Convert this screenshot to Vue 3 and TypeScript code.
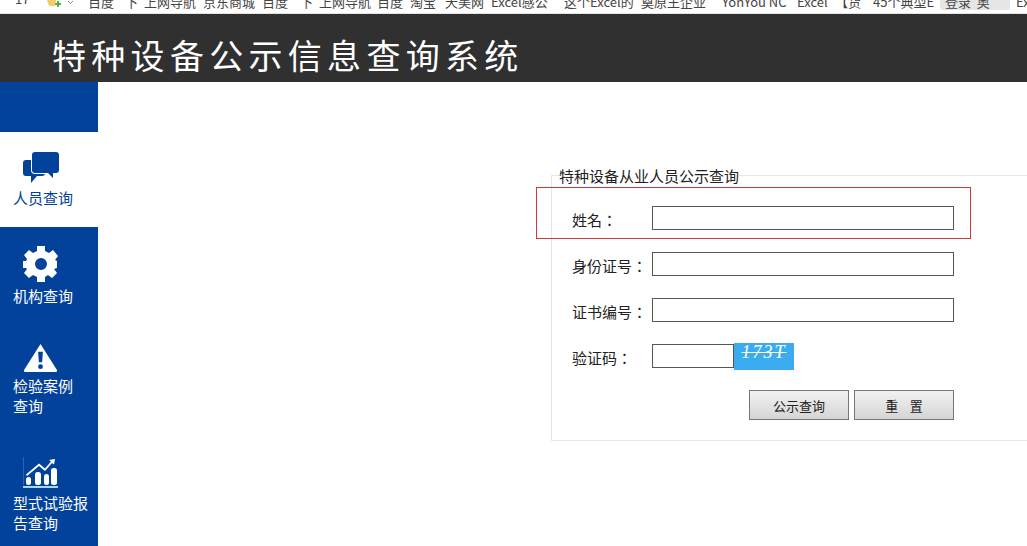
<script setup lang="ts">
const bookmarks: { text: string; w: number; hl?: boolean }[] = [
  { text: '', w: 88 },
  { text: '百度', w: 37 },
  { text: '下', w: 19 },
  { text: '上网导航', w: 59 },
  { text: '京东商城', w: 59 },
  { text: '百度', w: 38 },
  { text: '下', w: 19 },
  { text: '上网导航', w: 58 },
  { text: '百度', w: 33 },
  { text: '淘宝', w: 35 },
  { text: '天美网', w: 46 },
  { text: 'Excel感公', w: 73 },
  { text: '这个Excel的', w: 77 },
  { text: '奠原王企业', w: 81 },
  { text: 'YonYou NC', w: 75 },
  { text: 'Excel', w: 38 },
  { text: '【货', w: 38 },
  { text: '45个典型E', w: 67 },
  { text: '登录  奥', w: 70, hl: true },
  { text: '', w: 6 },
  { text: 'Ex', w: 11 },
]
const rows = [
  { label: '身份证号：' },
  { label: '证书编号：' },
]
</script>

<template>
  <div class="page">
    <div class="bookmarks">
      <span v-for="(b, i) in bookmarks" :key="i" class="bm" :class="{ hl: b.hl }" :style="{ width: b.w + 'px' }">{{ b.text }}</span>
      <span class="back">17</span>
      <svg class="star" width="27" height="8" viewBox="0 0 27 8">
        <path d="M0 0h9l-1 6H2z" fill="#f1cf62"/>
        <path d="M8 3h2V1h2v2h2v2h-2v2h-2V5H8z" fill="#4caf50"/>
        <path d="M21 1l2.500 2.500L26 1" fill="none" stroke="#888"/>
      </svg>
    </div>
    <header class="top">特种设备公示信息查询系统</header>
    <div class="body">
      <nav class="side">
        <div class="item active">
          <svg class="icon" width="36" height="31" viewBox="0 0 36 31">
            <path d="M3 8h16c2 0 3 1 3 3v10c0 2-1 3-3 3h-5l-6 7v-7H3c-2 0-3-1-3-3V11c0-2 1-3 3-3z" fill="#03429b"/>
            <path d="M12 0h21c2 0 3 1 3 3v15c0 2-1 3-3 3h-3v5l-5-5H12c-2 0-3-1-3-3V3c0-2 1-3 3-3z" fill="#03429b" stroke="#fff" stroke-width="2" paint-order="stroke"/>
          </svg>
          <div class="name">人员查询</div>
        </div>
        <div class="item i2">
          <svg class="icon" width="36" height="36" viewBox="0 0 36 36">
            <path fill-rule="evenodd" fill="#fff" d="M14 0h8v5l4 2 4-3 5 6-3 4 2 1v7l-3 1 3 4-5 5-4-3-3 2v5h-8v-5l-4-2-4 3-5-5 3-4-1-1H0v-7h3l1-2-3-4 5-5 4 3 4-2zM18 12a6 6 0 1 0 0 12 6 6 0 1 0 0-12z"/>
          </svg>
          <div class="name">机构查询</div>
        </div>
        <div class="item i3">
          <svg class="icon" width="35" height="28" viewBox="0 0 36 29">
            <path fill-rule="evenodd" fill="#fff" d="M18 0 35 27c.6 1 0 2-1 2H2c-1 0-1.600-1-1-2zM15.500 8l.8 11h3.400l.8-11zM18 21a2.500 2.500 0 1 0 0 5 2.500 2.500 0 1 0 0-5z"/>
          </svg>
          <div class="name">检验案例<br />查询</div>
        </div>
        <div class="item i4">
          <svg class="icon" width="35" height="31" viewBox="0 0 35 31">
            <path d="M.5 0v28" stroke="#2a63b2" fill="none"/>
            <g fill="#fff">
              <rect x="3" y="20" width="5" height="8" rx="2.500"/>
              <rect x="12" y="15" width="6" height="13" rx="2.500"/>
              <rect x="21" y="17" width="5" height="11" rx="2.500"/>
              <rect x="28" y="11" width="6" height="17" rx="2.500"/>
              <path d="M32 2l-6 1 2 1.500-6 7-6-5-13 11 1 1.500 12-10 6 5 7-8 2 1.500z"/>
            </g>
            <rect x="0" y="29" width="35" height="2" fill="#a9d8f5"/>
          </svg>
          <div class="name">型式试验报<br />告查询</div>
        </div>
      </nav>
      <main class="main">
        <div class="mark"></div>
        <fieldset class="panel">
          <legend class="legend">特种设备从业人员公示查询</legend>
          <div class="row">
            <label class="label">姓名：</label>
            <input class="field" type="text" />
          </div>
          <div v-for="r in rows" :key="r.label" class="row">
            <label class="label">{{ r.label }}</label>
            <input class="field" type="text" />
          </div>
          <div class="row">
            <label class="label">验证码：</label>
            <input class="field short" type="text" />
            <div class="captcha"><span>173T</span></div>
          </div>
          <div class="actions">
            <button class="btn" type="button">公示查询</button>
            <button class="btn" type="button">重&nbsp;&nbsp;&nbsp;&nbsp;置</button>
          </div>
        </fieldset>
      </main>
    </div>
  </div>
</template>

<style>
html, body { margin: 0; height: 100%; overflow: hidden; background: #fff; }
</style>

<style scoped>
.page {
  width: 1027px;
  height: 546px;
  display: flex;
  flex-direction: column;
  overflow: hidden;
  font-family: "Noto Sans CJK SC", "Liberation Sans", sans-serif;
}
.bookmarks {
  position: relative;
  height: 13px;
  flex: none;
  display: flex;
  overflow: hidden;
  background: #fff;
  border-bottom: 1px solid #e3e3e3;
  font-size: 13px;
  color: #444;
}
.bm {
  flex: none;
  height: 10px;
  line-height: 3px;
  white-space: pre;
  overflow: hidden;
}
.bm.hl {
  padding-left: 5px;
  box-sizing: border-box;
  background: #e6e6e6;
  border-radius: 0 0 3px 3px;
}
.back {
  position: absolute;
  left: 15px;
  top: -8px;
  line-height: 14px;
}
.star {
  position: absolute;
  left: 47px;
  top: 0;
}
.top {
  flex: none;
  height: 68px;
  box-sizing: border-box;
  padding: 18px 0 0 52px;
  background: #303030;
  color: #fff;
  font-size: 34px;
  line-height: 46px;
  letter-spacing: 5.300px;
  white-space: nowrap;
}
.body {
  flex: 1;
  display: flex;
  min-height: 0;
}
.side {
  width: 98px;
  flex: none;
  box-sizing: border-box;
  padding-top: 50px;
  background: #03429b;
  color: #fff;
  font-size: 15px;
  line-height: 20px;
}
.item {
  box-sizing: border-box;
  padding-left: 13px;
}
.icon {
  display: block;
}
.active {
  height: 95px;
  padding-top: 20px;
  background: #fff;
  color: #03429b;
}
.active .icon { margin-left: 10px; }
.active .name { margin-top: 5px; }
.i2 { height: 108px; padding-top: 19px; }
.i2 .icon { margin-left: 10px; }
.i2 .name { margin-top: 2px; line-height: 24px; }
.i3 { height: 115px; padding-top: 9px; }
.i3 .icon { margin-left: 10px; }
.i3 .name { margin-top: 4px; }
.i4 { padding-top: 7px; }
.i4 .icon { margin-left: 10px; }
.i4 .name { margin-top: 5px; }
.main {
  position: relative;
  flex: 1;
  padding: 86px 0 0 453px;
  min-width: 0;
}
.mark {
  position: absolute;
  left: 438px;
  top: 105px;
  width: 433px;
  height: 50px;
  border: 1px solid #d0393b;
}
.panel {
  margin: 0;
  width: 476px;
  height: 273px;
  box-sizing: border-box;
  padding: 24px 0 0 20px;
  border: 1px solid #e6e6e6;
  border-right: none;
  min-width: 0;
}
.legend {
  position: relative;
  top: 1px;
  margin-left: -13px;
  padding: 0;
  font-size: 15px;
  line-height: 14px;
  color: #222;
}
.row {
  display: flex;
  align-items: center;
  height: 24px;
  margin-bottom: 22px;
}
.label {
  width: 80px;
  flex: none;
  box-sizing: border-box;
  padding-top: 3px;
  font-family: "Noto Sans CJK TC", "Noto Sans CJK SC", sans-serif;
  font-size: 15px;
  color: #222;
}
.field {
  width: 302px;
  height: 24px;
  box-sizing: border-box;
  margin: 0;
  padding: 0 2px;
  border: 1px solid #555;
  background: #fff;
  outline: none;
}
.field.short {
  width: 82px;
}
.captcha {
  width: 60px;
  height: 27px;
  margin-top: -1px;
  align-self: flex-start;
  flex: none;
  display: flex;
  justify-content: center;
  align-items: flex-start;
  background: radial-gradient(#5cbcf5 30%, #2ba3ec 60%) 0 0 / 2px 2px;
  color: #fff;
  font: italic 18px/18px "Liberation Serif", serif;
  letter-spacing: 2px;
}
.captcha span {
  text-decoration: line-through;
}
.actions {
  display: flex;
  gap: 5px;
  padding-left: 177px;
}
.btn {
  width: 100px;
  height: 30px;
  margin: 0;
  padding: 0;
  border: 1px solid #767676;
  background: linear-gradient(#f2f2f2, #d5d5d5);
  color: #222;
  font: 13px "Noto Sans CJK SC", sans-serif;
}
</style>
